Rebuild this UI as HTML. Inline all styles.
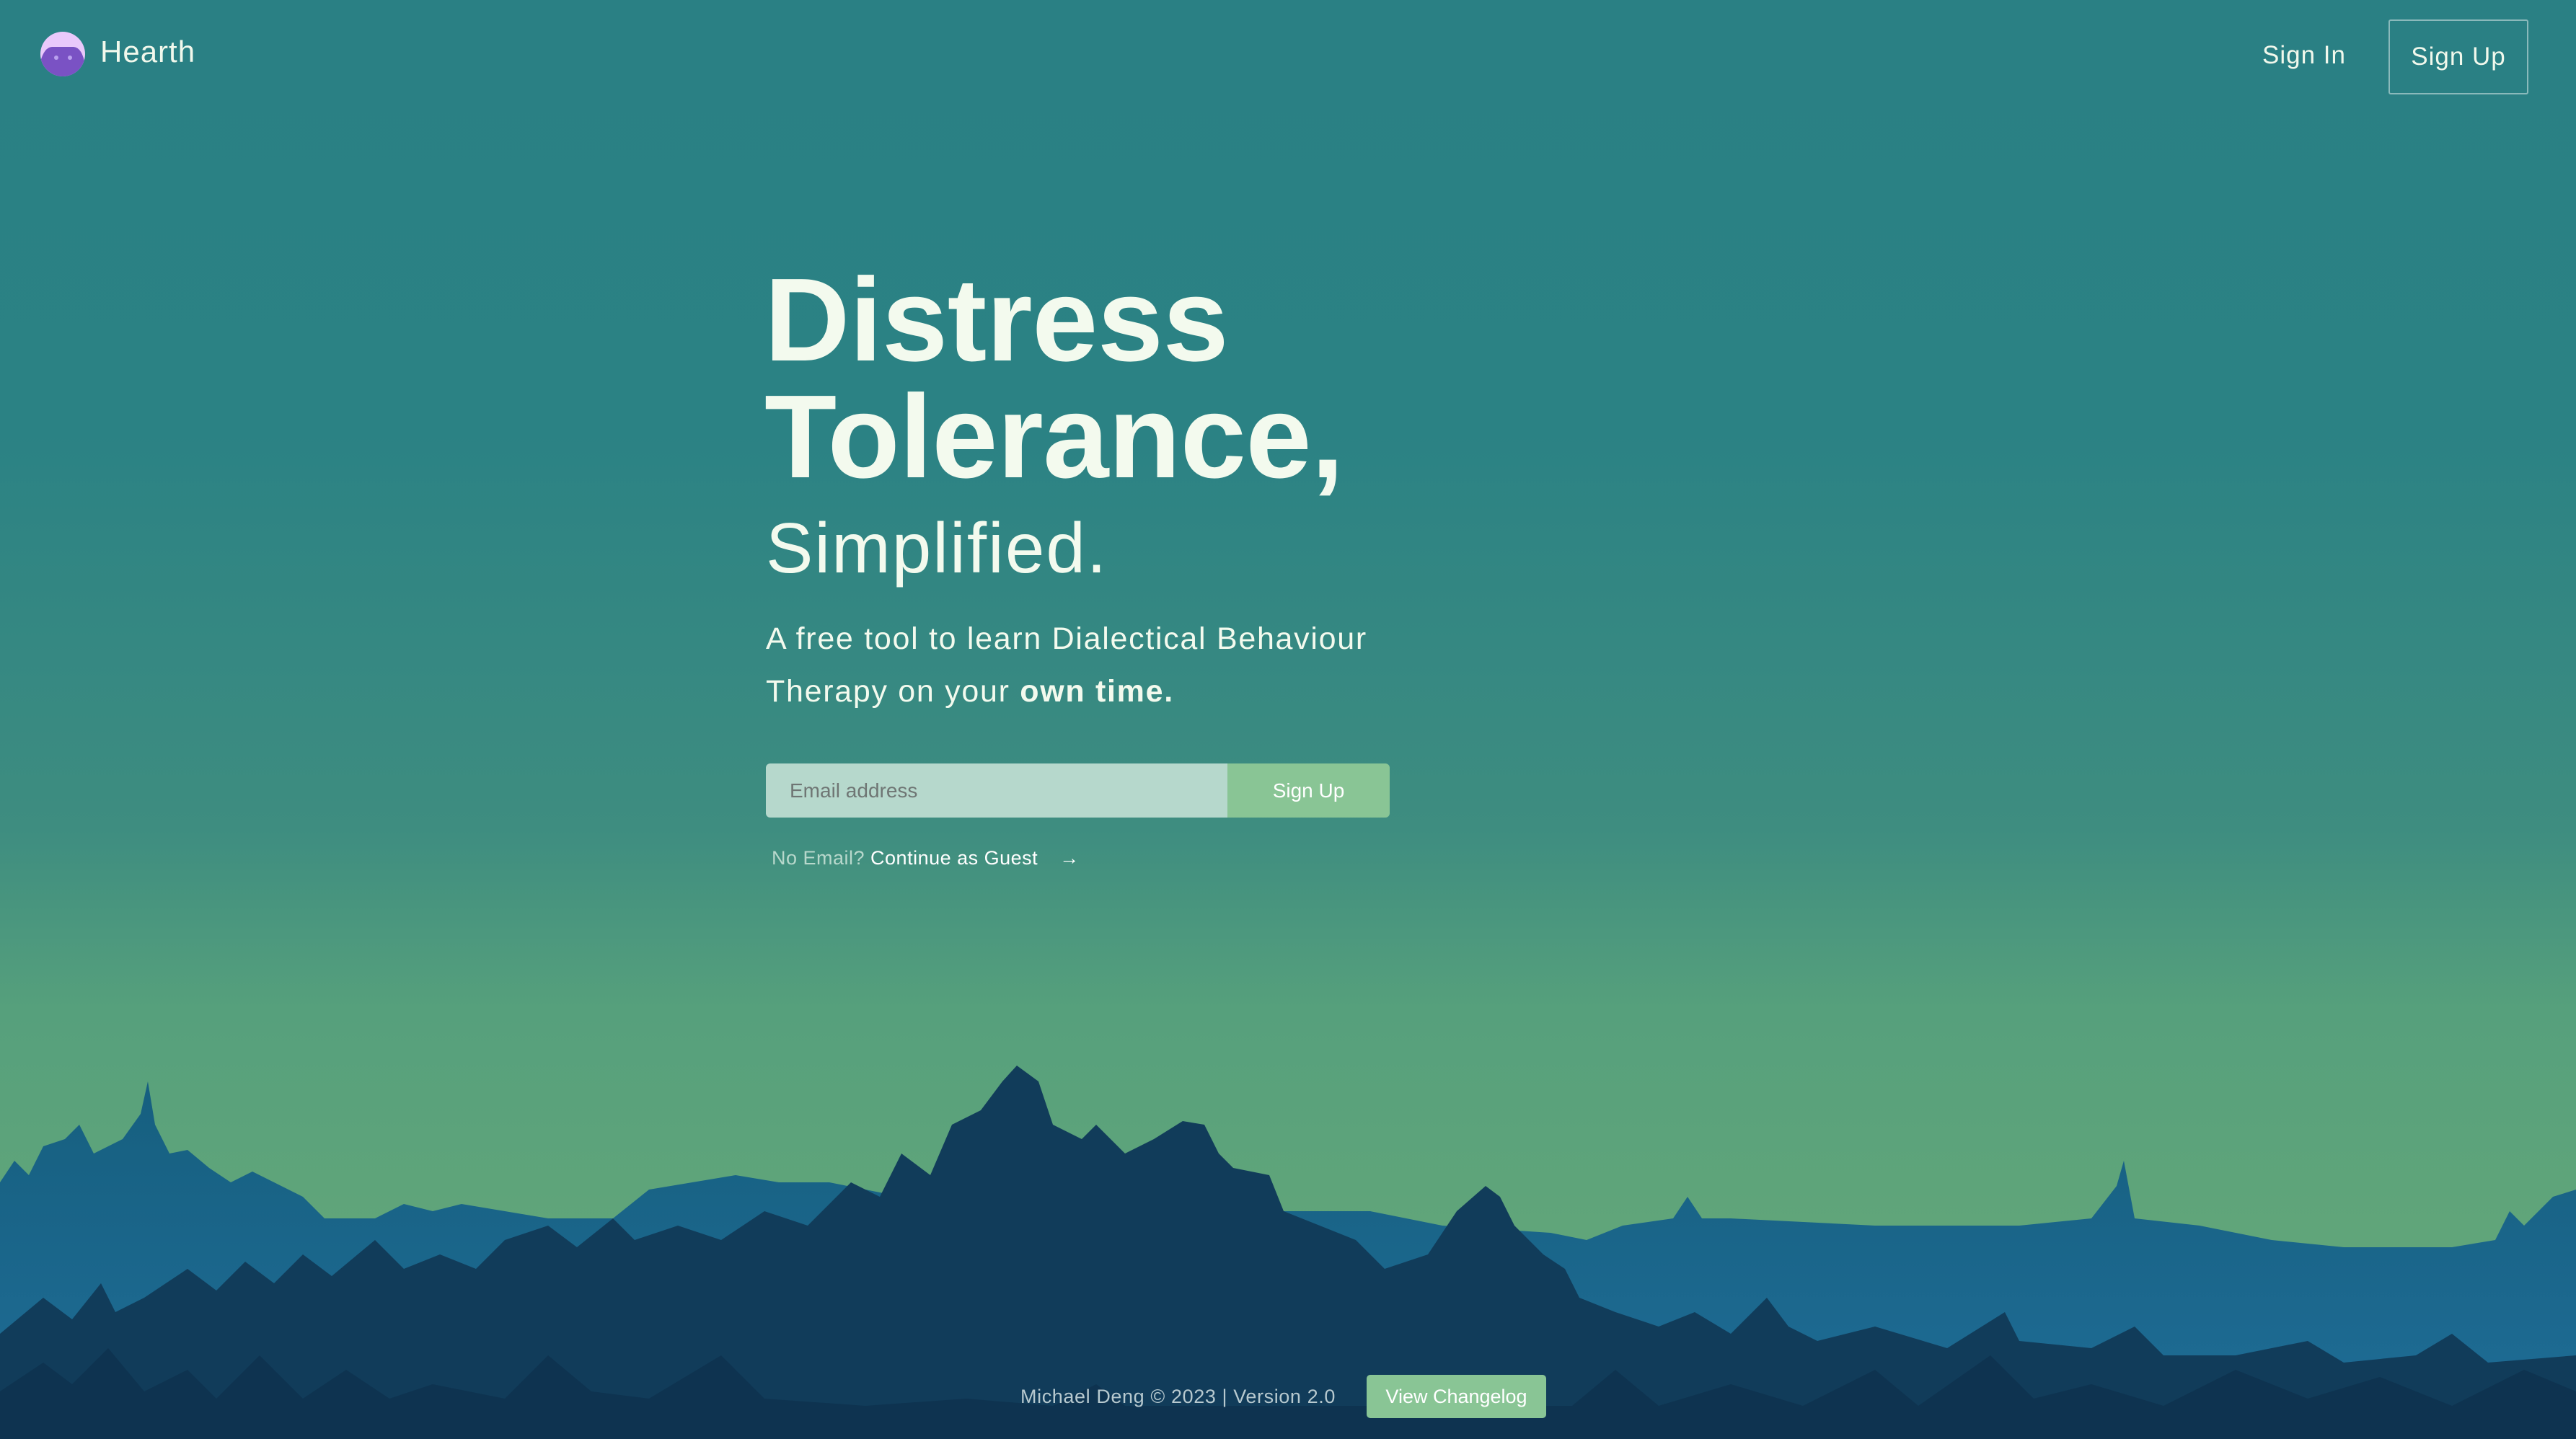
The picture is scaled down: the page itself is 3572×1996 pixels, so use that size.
<!DOCTYPE html>
<html><head><meta charset="utf-8"><style>
html,body{margin:0;padding:0;width:3572px;height:1996px;overflow:hidden;font-family:"Liberation Sans",sans-serif}
body{background:linear-gradient(180deg,#2a8084 0px,#2b8284 600px,#3e8d80 1150px,#56a07c 1400px,#60a57a 1700px,#60a57a 1996px);position:relative}
.a{position:absolute}
</style></head><body>
<svg class="a" style="left:0;top:0" width="3572" height="1996">
<defs><linearGradient id="g1" x1="0" y1="0" x2="0" y2="1"><stop offset="0" stop-color="#165f7f"/><stop offset="1" stop-color="#1f6d97"/></linearGradient></defs>
<path fill="url(#g1)" d="M0,1640 L20,1610 L40,1630 L60,1590 L90,1580 L110,1560 L130,1600 L170,1580 L195,1545 L205,1500 L215,1560 L235,1600 L260,1595 L290,1620 L320,1640 L350,1625 L380,1640 L420,1660 L450,1690 L520,1690 L560,1670 L600,1680 L640,1670 L700,1680 L760,1690 L850,1690 L900,1650 L960,1640 L1020,1630 L1080,1640 L1150,1640 L1250,1660 L1300,1680 L1900,1680 L2000,1700 L2150,1710 L2200,1720 L2250,1700 L2320,1690 L2340,1660 L2360,1690 L2400,1690 L2600,1700 L2800,1700 L2900,1690 L2935,1645 L2945,1610 L2960,1690 L3050,1700 L3150,1720 L3250,1730 L3400,1730 L3460,1720 L3480,1680 L3500,1700 L3540,1660 L3572,1650 L3572,1996 L0,1996 Z"/>
<path fill="#113c5a" d="M0,1850 L60,1800 L100,1830 L140,1780 L160,1820 L200,1800 L260,1760 L300,1790 L340,1750 L380,1780 L420,1740 L460,1770 L520,1720 L560,1760 L610,1740 L660,1760 L700,1720 L760,1700 L800,1730 L850,1690 L880,1720 L940,1700 L1000,1720 L1060,1680 L1120,1700 L1180,1640 L1220,1660 L1250,1600 L1290,1630 L1320,1560 L1360,1540 L1390,1500 L1410,1478 L1440,1500 L1460,1560 L1500,1580 L1520,1560 L1560,1600 L1600,1580 L1640,1555 L1670,1560 L1690,1600 L1710,1620 L1760,1630 L1780,1680 L1830,1700 L1880,1720 L1920,1760 L1980,1740 L2020,1680 L2060,1645 L2080,1660 L2100,1700 L2140,1740 L2170,1760 L2190,1800 L2240,1820 L2300,1840 L2350,1820 L2400,1850 L2450,1800 L2480,1840 L2520,1860 L2600,1840 L2700,1870 L2780,1820 L2800,1860 L2900,1870 L2960,1840 L3000,1880 L3100,1880 L3200,1860 L3250,1890 L3350,1880 L3400,1850 L3450,1890 L3572,1880 V1996 H0 Z"/>
<path fill="#0e3350" d="M0,1930 L60,1890 L100,1920 L150,1870 L200,1930 L260,1900 L300,1940 L360,1880 L420,1940 L480,1900 L540,1940 L600,1920 L700,1940 L760,1880 L820,1930 L900,1940 L1000,1880 L1060,1940 L1200,1950 L1340,1940 L1460,1950 L1520,1920 L1560,1950 L2180,1950 L2240,1900 L2300,1950 L2400,1920 L2500,1950 L2600,1900 L2660,1950 L2760,1880 L2820,1940 L2900,1920 L3000,1950 L3100,1900 L3200,1940 L3300,1910 L3400,1950 L3500,1900 L3572,1930 V1996 H0 Z"/>
<clipPath id="c"><circle cx="87" cy="75" r="31"/></clipPath>
<g clip-path="url(#c)"><rect x="50" y="40" width="80" height="80" fill="#e9c9fb"/>
<path d="M55,90 Q60,66 72,65 L102,65 Q114,66 118,90 L118,110 L55,110 Z" fill="#7a52c4"/>
<circle cx="78" cy="80" r="3" fill="#b9a0ee"/><circle cx="97" cy="80" r="3" fill="#b9a0ee"/></g>
</svg>
<div class="a" style="left:139px;top:48px;font-size:42px;color:#f1f8ec;letter-spacing:1px">Hearth</div>
<div class="a" style="left:3137px;top:57px;font-size:35px;color:#f1f8ec;letter-spacing:1px">Sign In</div>
<div class="a" style="left:3312px;top:27px;width:194px;height:104px;border:2px solid rgba(255,255,255,.45);box-sizing:border-box;border-radius:3px;color:#f1f8ec;font-size:35px;text-align:center;line-height:100px;letter-spacing:1px">Sign Up</div>
<div class="a" style="left:1060px;top:363px;font-size:164px;line-height:162px;font-weight:900;color:#f3faee;letter-spacing:-0.5px">Distress<br>Tolerance,</div>
<div class="a" style="left:1062px;top:704px;font-size:98px;color:#f3faee;letter-spacing:2px">Simplified.</div>
<div class="a" style="left:1062px;top:850px;font-size:43px;line-height:73px;color:#f3faee;letter-spacing:1.7px">A free tool to learn Dialectical Behaviour<br>Therapy on your <b>own time.</b></div>
<div class="a" style="left:1062px;top:1059px;width:640px;height:75px;background:#b6d8cc;border-radius:6px 0 0 6px;font-size:28px;color:#6f7674;line-height:75px;padding-left:33px;box-sizing:border-box">Email address</div>
<div class="a" style="left:1702px;top:1059px;width:225px;height:75px;background:#89c595;border-radius:0 6px 6px 0;font-size:28px;color:#fff;line-height:75px;text-align:center">Sign Up</div>
<div class="a" style="left:1070px;top:1175px;font-size:27px;color:#b8d8cc;letter-spacing:0.5px">No Email? <span style="color:#fff">Continue as Guest</span><span style="color:#fff;margin-left:30px">→</span></div>
<div class="a" style="left:1415px;top:1922px;font-size:27px;color:#b7c9cf;letter-spacing:0.6px">Michael Deng © 2023 | Version 2.0</div>
<div class="a" style="left:1895px;top:1907px;width:249px;height:60px;background:#89c595;border-radius:5px;color:#fff;font-size:27px;line-height:60px;text-align:center">View Changelog</div>
</body></html>
